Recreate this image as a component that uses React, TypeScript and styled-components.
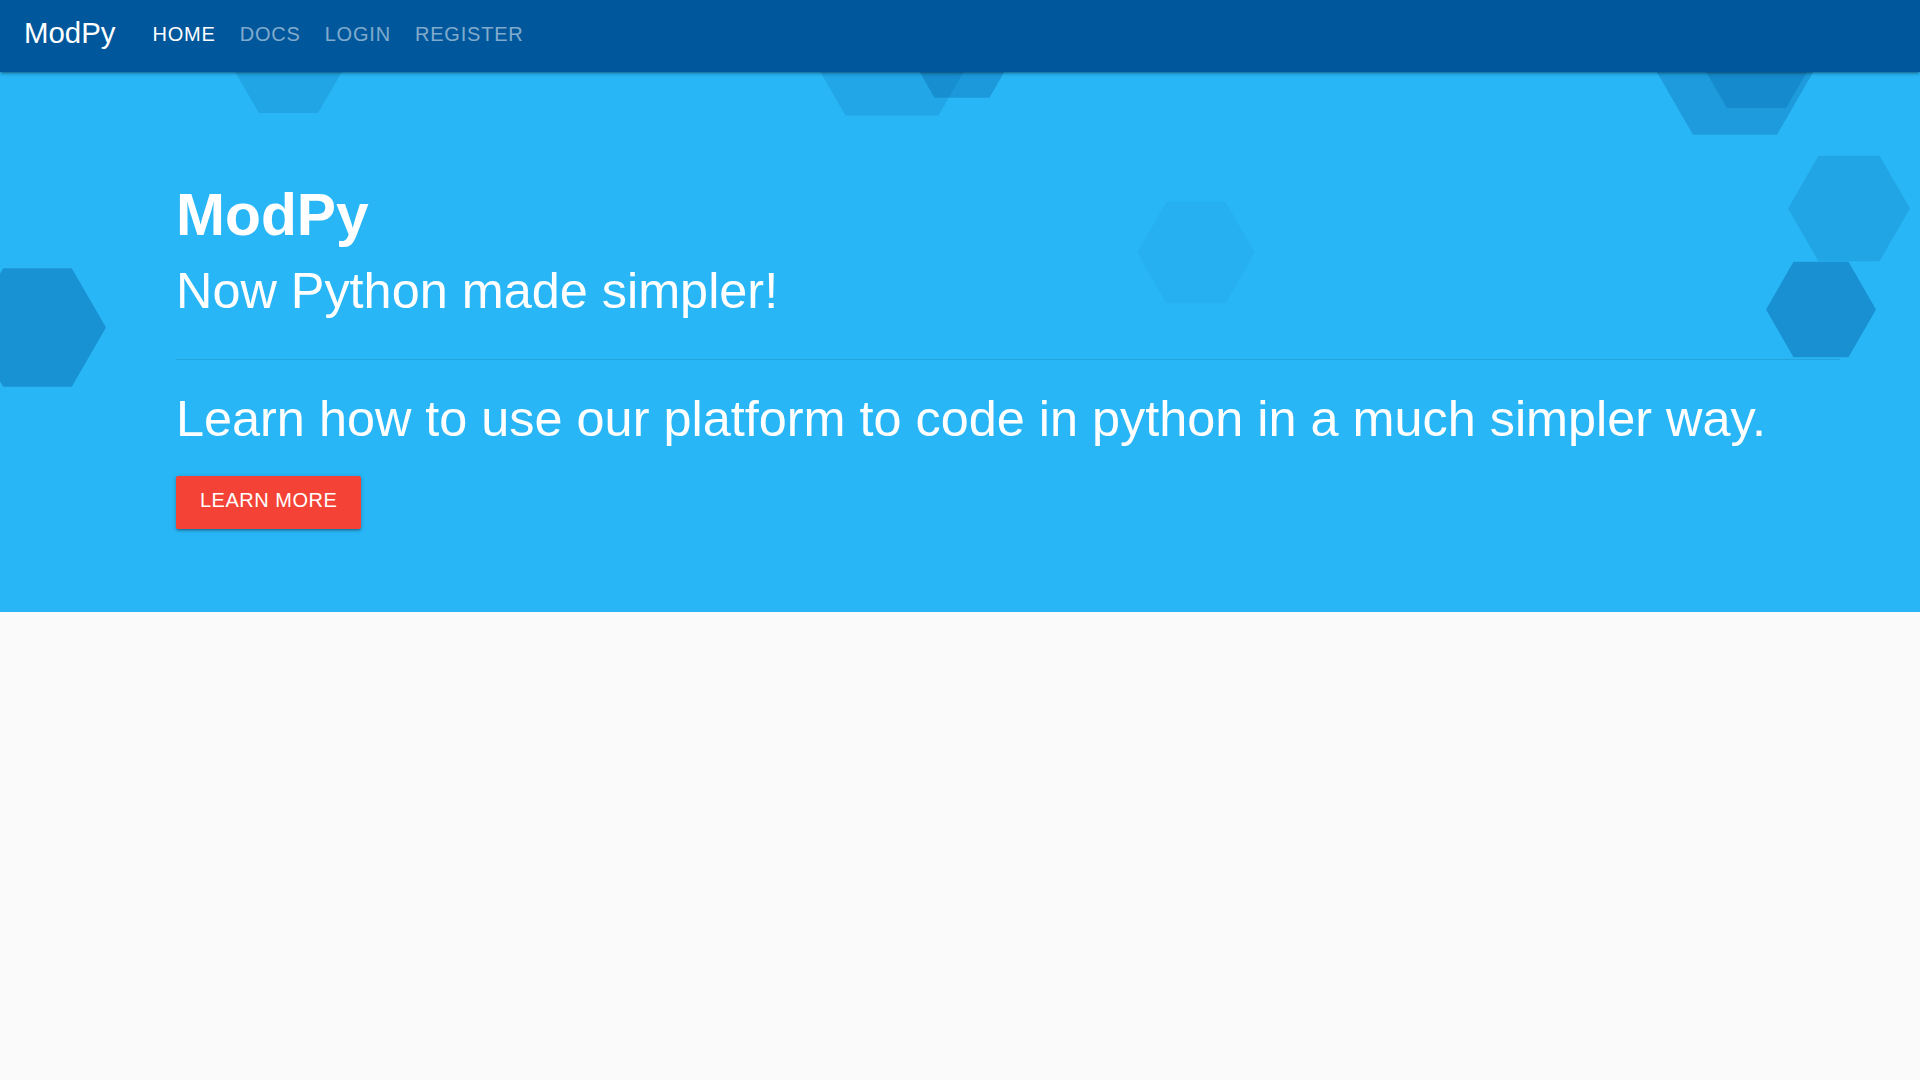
import React from "react";
import styled, { createGlobalStyle } from "styled-components";

const GlobalStyle = createGlobalStyle`
  html, body {
    margin: 0;
    padding: 0;
  }
  body {
    background: #fafafa;
    font-family: "Liberation Sans", Arial, sans-serif;
    min-height: 1080px;
  }
  * { box-sizing: border-box; }
`;

const NavBar = styled.nav`
  position: relative;
  z-index: 2;
  height: 72px;
  background: #01579b;
  display: flex;
  align-items: flex-start;
  padding: 0 24px;
  box-shadow: 0 2px 2px 0 rgba(0, 0, 0, 0.14), 0 3px 1px -2px rgba(0, 0, 0, 0.12),
    0 1px 5px 0 rgba(0, 0, 0, 0.2);
`;

const Brand = styled.a`
  margin-top: 18px;
  font-size: 29.4px;
  line-height: 1;
  color: #ffffff;
  text-decoration: none;
  margin-right: 37px;
`;

const NavList = styled.ul`
  list-style: none;
  margin: 24px 0 0;
  padding: 0;
  display: flex;
  gap: 24px;
`;

const NavItem = styled.li`
  display: block;
`;

const NavLink = styled.a<{ $active?: boolean }>`
  font-size: 20px;
  line-height: 1;
  letter-spacing: 0.8px;
  text-transform: uppercase;
  text-decoration: none;
  color: ${(p) => (p.$active ? "#ffffff" : "rgba(255, 255, 255, 0.5)")};
`;

const Hero = styled.section`
  position: relative;
  overflow: hidden;
  background: #29b6f6;
  padding: 111px 80px 83px 176px;
`;

const Decor = styled.svg`
  position: absolute;
  left: 0;
  top: 0;
  width: 1920px;
  height: 100%;
  z-index: 0;
`;

const Content = styled.div`
  position: relative;
  z-index: 1;
  color: #ffffff;
`;

const Title = styled.h1`
  margin: 0;
  font-size: 58.8px;
  line-height: 1.1;
  font-weight: 700;
`;

const Subtitle = styled.h2`
  margin: 15px 0 0;
  font-size: 50.4px;
  line-height: 1.1;
  font-weight: 400;
`;

const Rule = styled.hr`
  margin: 41px 0 0;
  border: 0;
  border-top: 1px solid rgba(0, 0, 0, 0.1);
  height: 0;
`;

const Lead = styled.p`
  margin: 31px 0 0;
  font-size: 50.4px;
  line-height: 1.1;
  font-weight: 400;
`;

const Button = styled.a`
  display: inline-block;
  margin-top: 29px;
  height: 53px;
  line-height: 49px;
  padding: 0 24px 4px;
  background: #f44336;
  color: #ffffff;
  font-size: 20px;
  letter-spacing: 0.5px;
  text-transform: uppercase;
  text-decoration: none;
  border-radius: 2px;
  box-shadow: 0 2px 2px 0 rgba(0, 0, 0, 0.14), 0 3px 1px -2px rgba(0, 0, 0, 0.12),
    0 1px 5px 0 rgba(0, 0, 0, 0.2);
`;

const Below = styled.main`
  background: #fafafa;
  min-height: 468px;
`;

type Hex = { cx: number; cy: number; s: number; a: number };

const hexes: Hex[] = [
  { cx: 288.5, cy: 62, s: 59, a: 0.18 },
  { cx: 892, cy: 35, s: 93, a: 0.16 },
  { cx: 962, cy: 50, s: 55, a: 0.3 },
  { cx: 1735, cy: 62, s: 84, a: 0.28 },
  { cx: 1756.5, cy: 57, s: 59, a: 0.25 },
  { cx: 1849, cy: 208.5, s: 61, a: 0.18 },
  { cx: 1821, cy: 309.5, s: 55, a: 0.4 },
  { cx: 1196, cy: 252.5, s: 59, a: 0.05 },
  { cx: 37.5, cy: 327.5, s: 68.5, a: 0.38 },
];

const hexPoints = ({ cx, cy, s }: Hex) => {
  const h = (s * Math.sqrt(3)) / 2;
  return [
    [cx - s, cy],
    [cx - s / 2, cy - h],
    [cx + s / 2, cy - h],
    [cx + s, cy],
    [cx + s / 2, cy + h],
    [cx - s / 2, cy + h],
  ]
    .map((p) => p.join(","))
    .join(" ");
};

export default function App() {
  return (
    <>
      <GlobalStyle />
      <NavBar>
        <Brand href="#">ModPy</Brand>
        <NavList>
          <NavItem>
            <NavLink href="#" $active>
              Home
            </NavLink>
          </NavItem>
          <NavItem>
            <NavLink href="#">Docs</NavLink>
          </NavItem>
          <NavItem>
            <NavLink href="#">Login</NavLink>
          </NavItem>
          <NavItem>
            <NavLink href="#">Register</NavLink>
          </NavItem>
        </NavList>
      </NavBar>
      <Hero>
        <Decor viewBox="0 72 1920 540" preserveAspectRatio="xMinYMin slice">
          {hexes.map((h, i) => (
            <polygon key={i} points={hexPoints(h)} fill="rgb(1,87,155)" fillOpacity={h.a} />
          ))}
        </Decor>
        <Content>
          <Title>ModPy</Title>
          <Subtitle>Now Python made simpler!</Subtitle>
          <Rule />
          <Lead>Learn how to use our platform to code in python in a much simpler way.</Lead>
          <Button href="#">Learn More</Button>
        </Content>
      </Hero>
      <Below />
    </>
  );
}
